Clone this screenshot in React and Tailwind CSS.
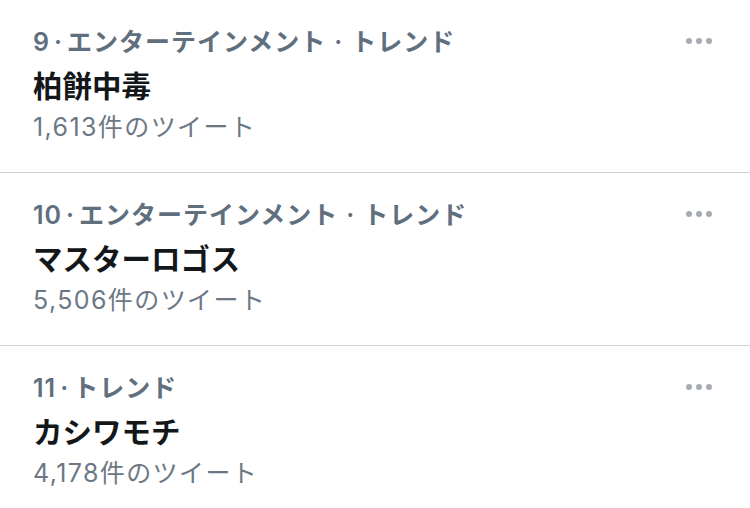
const trends = [
  { rank: 9, category: ["エンターテインメント", "トレンド"], title: "柏餅中毒", count: "1,613件のツイート" },
  { rank: 10, category: ["エンターテインメント", "トレンド"], title: "マスターロゴス", count: "5,506件のツイート" },
  { rank: 11, category: ["トレンド"], title: "カシワモチ", count: "4,178件のツイート" },
];

const font = {
  fontFamily: '"Inter", "Noto Sans CJK JP", sans-serif',
};

function TrendRow({ trend, last }) {
  return (
    <div
      className={`flex justify-between pl-[33px] pr-[38px] pt-[26px] pb-[29px] ${
        last ? "" : "border-b border-[#cfd3d6]"
      }`}
    >
      <div className="flex flex-col">
        {/* category */}
        <div className="text-[25px] leading-[32px] tracking-[1px] font-semibold text-[#5f6f7e] whitespace-nowrap">
          {trend.rank}
          <span className="mx-[4px]">·</span>
          {trend.category.map((c, i) => (
            <span key={c}>
              {i > 0 && <span className="mx-[8px]">·</span>}
              {c}
            </span>
          ))}
        </div>
        {/* title */}
        <div className="mt-[8px] text-[29.5px] leading-[40px] font-bold text-[#14171a]">
          {trend.title}
        </div>
        {/* tweet count */}
        <div className="mt-[5px] text-[25px] leading-[32px] tracking-[1.4px] text-[#6b7884]">
          {trend.count}
        </div>
      </div>

      {/* more */}
      <div className="flex gap-[4px] pt-[12px]">
        <span className="w-[6px] h-[6px] rounded-full bg-[#a6acb2]" />
        <span className="w-[6px] h-[6px] rounded-full bg-[#a6acb2]" />
        <span className="w-[6px] h-[6px] rounded-full bg-[#a6acb2]" />
      </div>
    </div>
  );
}

export default function App() {
  return (
    <div className="w-[750px] h-[508px] bg-white overflow-hidden" style={font}>
      {trends.map((t, i) => (
        <TrendRow key={t.rank} trend={t} last={i === trends.length - 1} />
      ))}
    </div>
  );
}
